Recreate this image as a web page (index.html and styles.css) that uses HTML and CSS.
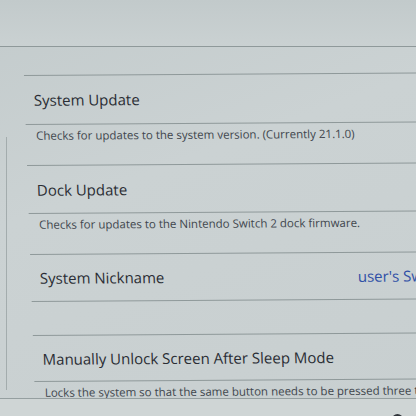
FILE: index.html
```html
<!DOCTYPE html>
<html lang="en">
    <head>
        <meta charset="UTF-8">
        <meta name="viewport" content="width=device-width, initial-scale=1.0">
        <title>System Settings</title>
        <link rel="stylesheet" href="styles.css">
    </head>
    <body>
        <div class="screen">
            <!-- top strip of the settings screen -->
            <header class="topbar"></header>

            <div class="content">
                <div class="sidebar"></div>

                <!-- settings list -->
                <main class="list">
                    <div class="row spacer"></div>
                    <div class="row title">System Update</div>
                    <div class="row desc">Checks for updates to the system version. (Currently 21.1.0)</div>
                    <div class="row title t2">Dock Update</div>
                    <div class="row desc">Checks for updates to the Nintendo Switch 2 dock firmware.</div>
                    <div class="row title t3">
                        <span>System Nickname</span>
                        <span class="value">user's Switch 2</span>
                    </div>
                    <div class="row blank"></div>
                    <div class="row title t4">Manually Unlock Screen After Sleep Mode</div>
                    <div class="row desc">Locks the system so that the same button needs to be pressed three times to unlock the screen.</div>
                </main>
            </div>

            <!-- bottom button bar -->
            <footer class="footer">
                <span class="btn"></span>
            </footer>
        </div>
    </body>
</html>
```

FILE: styles.css
```css
body {
    margin: 0;
    padding: 0;
    font-family: 'Open Sans', 'Noto Sans', sans-serif;
    background-color: #c9d0d1;
    color: #2b2f36;
}

.screen {
    width: 416px;
    height: 416px;
    display: flex;
    flex-direction: column;
    overflow: hidden;
    background: linear-gradient(160deg, #c3cbcc 0%, #cbd2d3 40%, #c8cfd0 100%);
}

.topbar {
    height: 46px;
    flex-shrink: 0;
    border-bottom: 1px solid #8f999a;
    background: linear-gradient(180deg, #c2cacb 0%, #cad1d2 100%);
}

.content {
    flex: 1;
    display: flex;
    overflow: hidden;
}

.sidebar {
    width: 6px;
    flex-shrink: 0;
    margin: 90px 0 8px;
    border-right: 1px solid #a3acad;
}

.list {
    flex: 1;
    min-width: 0;
    padding-left: 16px;
    transform: skewX(1.6deg) rotate(-0.35deg);
    transform-origin: top left;
    white-space: nowrap;
}

.row {
    display: flex;
    align-items: center;
    justify-content: space-between;
    border-bottom: 1px solid #8f999a;
    padding-left: 9px;
}

.spacer {
    height: 28px;
}

.title {
    height: 48px;
    font-size: 15px;
    color: #2a2d34;
}

.t2 {
    height: 47px;
}

.t3 {
    height: 46px;
}

.t4 {
    height: 45px;
}

.desc {
    height: 41px;
    align-items: flex-start;
    padding-top: 3px;
    box-sizing: border-box;
    padding-left: 10px;
    font-size: 11.5px;
    color: #40464d;
}

.blank {
    height: 33px;
}

.value {
    width: 66px;
    color: #2f4fa6;
}

.footer {
    height: 17px;
    flex-shrink: 0;
    border-top: 1px solid #959fa0;
    background-color: #cfd5d5;
    position: relative;
}

.btn {
    position: absolute;
    right: 13px;
    bottom: -9px;
    width: 11px;
    height: 11px;
    border-radius: 50%;
    background-color: #30343a;
}
```
